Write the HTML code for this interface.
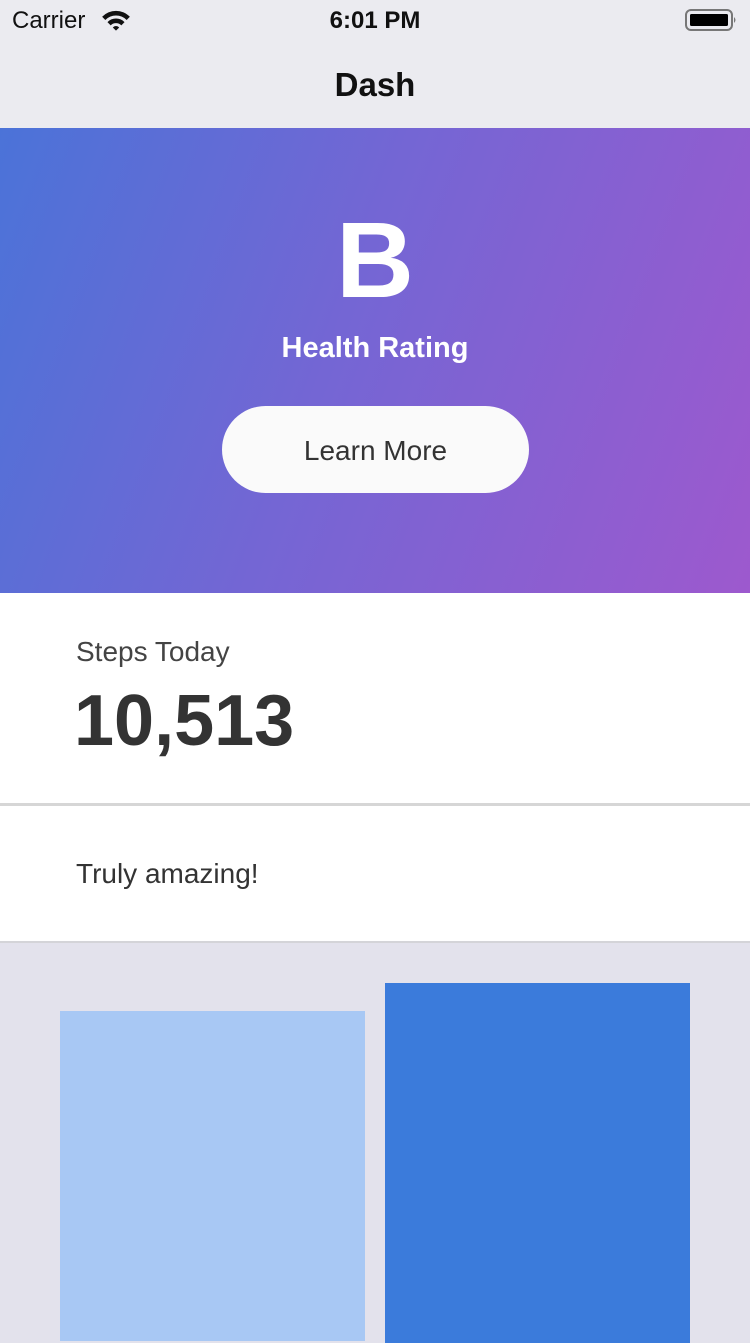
<!DOCTYPE html>
<html><head><meta charset="utf-8"><style>
*{margin:0;padding:0;box-sizing:border-box}
body{width:750px;height:1334px;overflow:hidden;background:#e3e2ec;font-family:"Liberation Sans",sans-serif;position:relative}
.abs{position:absolute}
</style></head><body>
<div class="abs" style="left:0;top:0;width:750px;height:128px;background:#ebebf0"></div>
<div class="abs" style="left:12px;top:7px;font-size:24px;color:#111">Carrier</div>
<svg class="abs" style="left:100px;top:8px" width="32" height="24" viewBox="0 0 30 22"><path d="M2 8 A18 18 0 0 1 28 8 L25 11 A14 14 0 0 0 5 11Z M7 13 A11 11 0 0 1 23 13 L20 16 A7 7 0 0 0 10 16Z M12 18 A4 4 0 0 1 18 18 L15 21Z" fill="#111"/></svg>
<div class="abs" style="left:0;width:750px;top:7px;text-align:center;font-size:24px;font-weight:bold;color:#111">6:01 PM</div>
<svg class="abs" style="left:685px;top:9px" width="56" height="24" viewBox="0 0 56 24"><rect x="1" y="1" width="46" height="20" rx="5" fill="none" stroke="#777" stroke-width="2"/><rect x="5" y="5" width="38" height="12" rx="1.5" fill="#000"/><path d="M49 8 q3 3 0 6z" fill="#777"/></svg>
<div class="abs" style="left:0;width:750px;top:66px;text-align:center;font-size:33px;font-weight:bold;color:#111">Dash</div>
<div class="abs" style="left:0;top:128px;width:750px;height:465px;background:linear-gradient(110deg,#4b73d8 0%,#7466d4 45%,#9d59ce 100%)"></div>
<div class="abs" style="left:0;width:750px;top:190px;text-align:center;font-size:108px;font-weight:bold;color:#fff;line-height:140px">B</div>
<div class="abs" style="left:0;width:750px;top:332px;text-align:center;font-size:29px;font-weight:bold;color:#fff">Health Rating</div>
<div class="abs" style="left:222px;top:406px;width:307px;height:87px;border-radius:44px;background:#fafafa;text-align:center;line-height:89px;font-size:28px;color:#333">Learn More</div>
<div class="abs" style="left:0;top:593px;width:750px;height:210px;background:#fff"></div>
<div class="abs" style="left:76px;top:636px;font-size:28px;color:#444">Steps Today</div>
<div class="abs" style="left:74px;top:680px;font-size:72px;font-weight:bold;color:#333">10,513</div>
<div class="abs" style="left:0;top:803px;width:750px;height:3px;background:#d6d6d6"></div>
<div class="abs" style="left:0;top:806px;width:750px;height:135px;background:#fff"></div>
<div class="abs" style="left:76px;top:858px;font-size:28px;color:#333">Truly amazing!</div>
<div class="abs" style="left:0;top:941px;width:750px;height:2px;background:#d4d4d8"></div>
<div class="abs" style="left:60px;top:1011px;width:305px;height:330px;background:#a8c8f4"></div>
<div class="abs" style="left:385px;top:983px;width:305px;height:360px;background:#3b7bdb"></div>
</body></html>
